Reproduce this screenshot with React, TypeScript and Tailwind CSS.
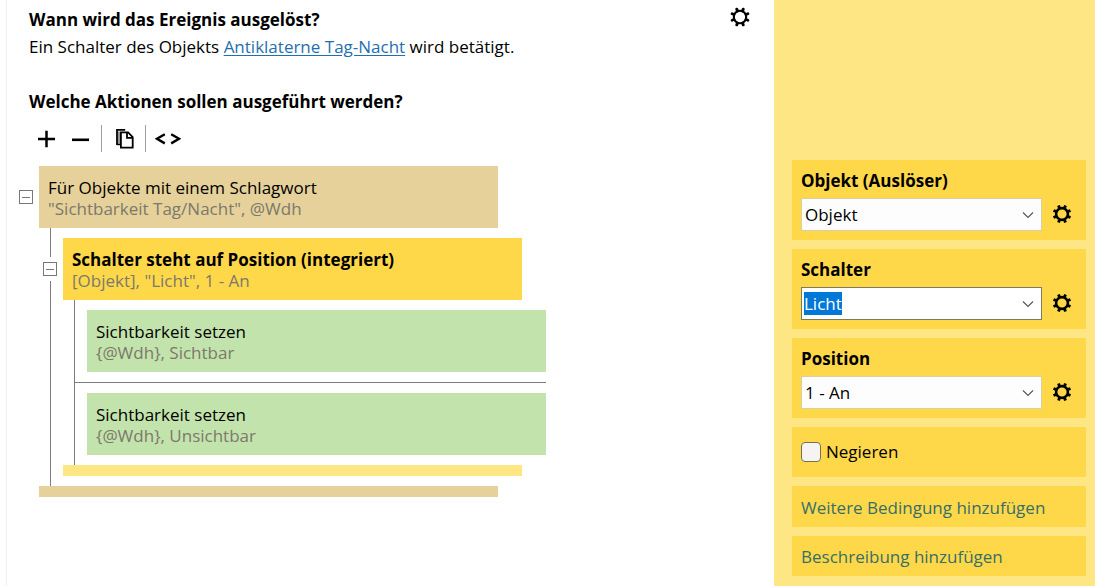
import { useEffect, useRef, useState } from 'react'
import type { ReactNode } from 'react'

const TOOTH_ANGLES = [22.5, 67.5, 112.5, 157.5, 202.5, 247.5, 292.5, 337.5]

function GearIcon({ bold = false }: { bold?: boolean }) {
  return (
    <svg viewBox="0 0 20 20" className="block size-5" fill="none" stroke="#000">
      <circle cx="10" cy="10" r={bold ? 5.9 : 6.2} strokeWidth={bold ? 2.6 : 2.1} />
      {TOOTH_ANGLES.map((angle) => (
        <path
          key={angle}
          d={bold ? 'M10 4V.8' : 'M10 3.4V1.5'}
          strokeWidth="2.9"
          strokeLinecap={bold ? 'butt' : 'round'}
          transform={`rotate(${angle} 10 10)`}
        />
      ))}
    </svg>
  )
}

function ChevronIcon() {
  return (
    <svg
      viewBox="0 0 12 8"
      className="pointer-events-none absolute top-[13px] right-2 h-2 w-3"
      fill="none"
      stroke="#555"
      strokeWidth="1.1"
    >
      <path d="M1 1.5 6 6.5 11 1.5" />
    </svg>
  )
}

interface BlockProps {
  title: string
  detail: string
  color: string
  bold?: boolean
}

function Block({ title, detail, color, bold }: BlockProps) {
  return (
    <div className={`w-full px-[9px] pt-[11px] pb-[9px] leading-[21px] ${color}`}>
      <div className={bold ? 'font-bold' : ''}>{title}</div>
      <div className="text-[#7b796b]">{detail}</div>
    </div>
  )
}

interface GroupProps extends BlockProps {
  footerColor: string
  children: ReactNode
}

// Collapsible block: header, indented children on a guide line, closing bar
function Group({ footerColor, children, ...block }: GroupProps) {
  const [open, setOpen] = useState(true)

  return (
    <div className="w-[459px]">
      <div className="relative">
        <button
          type="button"
          aria-label={open ? 'Zuklappen' : 'Aufklappen'}
          aria-expanded={open}
          onClick={() => setOpen(!open)}
          className="absolute top-1/2 -left-[25px] flex size-6 -translate-y-1/2 items-center justify-center bg-white"
        >
          <svg viewBox="0 0 14 14" className="size-3.5" fill="none" stroke="#777">
            <rect x="0.5" y="0.5" width="13" height="13" />
            <path d={open ? 'M3 7.5h8' : 'M3 7.5h8M7.5 3v8'} />
          </svg>
        </button>
        <Block {...block} />
      </div>
      {open && <div className="ml-[11px] border-l border-[#7b7b80] py-2.5 pl-3">{children}</div>}
      <div className={`h-[11px] ${footerColor}`} />
    </div>
  )
}

function Field({ id, label, children }: { id: string; label: string; children: ReactNode }) {
  return (
    <div className="bg-[#ffd84a] p-[9px]">
      <label htmlFor={id} className="block leading-6 font-bold">
        {label}
      </label>
      <div className="mt-[5px] flex items-start gap-2.5">
        <div className="relative w-[241px]">
          {children}
          <ChevronIcon />
        </div>
        <button type="button" aria-label={`${label} bearbeiten`} className="mt-1.5">
          <GearIcon bold />
        </button>
      </div>
    </div>
  )
}

const SELECT_CLASS =
  'block h-[33px] w-full appearance-none border border-[#d9cf9f] bg-[#fdfdfd] px-[3px] outline-none'

export default function App() {
  const switchInput = useRef<HTMLInputElement>(null)

  useEffect(() => {
    switchInput.current?.focus()
    switchInput.current?.select()
  }, [])

  return (
    <div className="flex min-h-screen bg-white font-['Open_Sans','Noto_Sans',sans-serif] text-[17px] text-black">
      <main className="ml-1.5 min-w-0 flex-1 border-l border-[#eeeeee] pt-1.5 pr-6 pl-[22px]">
        <div className="flex items-start justify-between leading-[27px]">
          <div>
            <h2 className="font-bold">Wann wird das Ereignis ausgelöst?</h2>
            <p>
              Ein Schalter des Objekts{' '}
              <a href="#objekt" className="text-[#1f6fb0] underline underline-offset-2">
                Antiklaterne Tag-Nacht
              </a>{' '}
              wird betätigt.
            </p>
          </div>
          <button type="button" aria-label="Ereignis bearbeiten" className="mt-px">
            <GearIcon />
          </button>
        </div>

        <h2 className="mt-7 leading-[27px] font-bold">Welche Aktionen sollen ausgeführt werden?</h2>

        <div className="mt-2.5 flex h-[27px] items-stretch">
          <button type="button" aria-label="Hinzufügen" className="flex w-[34px] items-center justify-center">
            <svg viewBox="0 0 18 18" className="size-[18px]" stroke="#000" strokeWidth="2.5">
              <path d="M9.5 .7v16.6M1 9h17" />
            </svg>
          </button>
          <button type="button" aria-label="Entfernen" className="flex w-[34px] items-center justify-center">
            <svg viewBox="0 0 18 18" className="size-[18px]" stroke="#000" strokeWidth="2.6">
              <path d="M1 9.8h17" />
            </svg>
          </button>
          <span className="ml-1 w-px bg-[#a0a0a0]" />
          <button type="button" aria-label="Kopieren" className="flex w-[43px] items-center justify-center pl-0.5">
            <svg viewBox="0 0 20 20" className="size-5" fill="none" stroke="#000" strokeWidth="1.8">
              <path d="M2 .9h8.2M2 0v16M2 15.4h3" />
              <path d="M4 2.5v12" stroke="#8a8a8a" />
              <path d="M5.9 3.4h7.2l4.6 4.7v10.6H5.9z" fill="#fff" />
              <path d="M12 3.4v5.4h5.7" />
            </svg>
          </button>
          <span className="w-px bg-[#a0a0a0]" />
          <button type="button" aria-label="Quelltext" className="flex w-11 items-center justify-center">
            <svg viewBox="0 0 26 14" className="h-3.5 w-[26px]" fill="none" stroke="#000" strokeWidth="2.4">
              <path d="M9.8 2.2 2 6.8l7.8 4.6M16.2 2.2l7.8 4.6-7.8 4.6" />
            </svg>
          </button>
        </div>

        <div className="mt-3.5 ml-2.5">
          <Group
            title="Für Objekte mit einem Schlagwort"
            detail={'"Sichtbarkeit Tag/Nacht", @Wdh'}
            color="bg-[#e6d19a]"
            footerColor="bg-[#e6d19a]"
          >
            <Group
              title="Schalter steht auf Position (integriert)"
              detail={'[Objekt], "Licht", 1 - An'}
              color="bg-[#ffd84a]"
              footerColor="bg-[#ffe685]"
              bold
            >
              <div className="w-[459px]">
                <Block title="Sichtbarkeit setzen" detail="{@Wdh}, Sichtbar" color="bg-[#c3e3ac]" />
                <div className="my-2.5 -ml-3 h-px bg-[#7b7b80]" />
                <Block title="Sichtbarkeit setzen" detail="{@Wdh}, Unsichtbar" color="bg-[#c3e3ac]" />
              </div>
            </Group>
          </Group>
        </div>
      </main>

      <aside className="flex w-[321px] shrink-0 flex-col gap-[9px] bg-[#ffe685] pt-40 pr-[9px] pb-2.5 pl-[18px]">
        <Field id="objekt" label="Objekt (Auslöser)">
          <select id="objekt" className={SELECT_CLASS}>
            <option>Objekt</option>
          </select>
        </Field>
        <Field id="schalter" label="Schalter">
          <input
            id="schalter"
            ref={switchInput}
            type="text"
            defaultValue="Licht"
            className="block h-[33px] w-full border border-[#7d7a60] bg-white px-0.5 leading-[25px] outline-none selection:bg-[#0078d7] selection:text-white"
          />
        </Field>
        <Field id="position" label="Position">
          <select id="position" className={SELECT_CLASS}>
            <option>1 - An</option>
          </select>
        </Field>
        <label className="flex h-[50px] items-center gap-[5px] bg-[#ffd84a] px-[9px]">
          <input
            type="checkbox"
            className="size-5 appearance-none rounded-sm border border-[#77704f] bg-[#f5f4f3] checked:bg-[#0078d7]"
          />
          Negieren
        </label>
        <a href="#bedingung" className="bg-[#ffd84a] px-[9px] pt-2.5 pb-[7px] leading-6 text-[#366f68]">
          Weitere Bedingung hinzufügen
        </a>
        <a href="#beschreibung" className="bg-[#ffd84a] px-[9px] pt-[9px] pb-[7px] leading-6 text-[#366f68]">
          Beschreibung hinzufügen
        </a>
      </aside>
    </div>
  )
}
